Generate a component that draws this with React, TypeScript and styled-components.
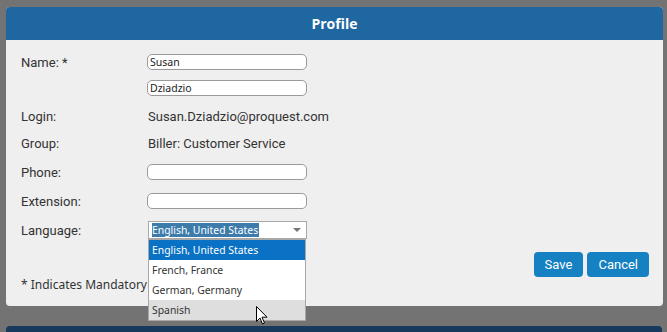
import React from 'react'
import styled, { createGlobalStyle } from 'styled-components'

const GlobalStyle = createGlobalStyle`
	html, body {
		margin: 0;
		padding: 0;
		background: #737373;
		overflow: hidden;
	}
`

// Страница с модальным окном
const Page = styled.div`
	width: 667px;
	height: 332px;
	padding: 7px 4px 0 6px;
	box-sizing: border-box;
	display: flex;
	flex-direction: column;
	gap: 20px;
`

const Modal = styled.div`
	width: 657px;
	border-radius: 4px;
	background: #efefef;
	display: flex;
	flex-direction: column;
`

const Header = styled.div`
	height: 33px;
	background: #1f67a0;
	border-radius: 4px 4px 0 0;
	display: flex;
	align-items: center;
	justify-content: center;
	color: #fff;
	font-family: 'Open Sans', sans-serif;
	font-weight: 700;
	font-size: 14px;
`

const Body = styled.div`
	padding: 8px 14px 13px 15px;
	display: flex;
	flex-direction: column;
`

const Row = styled.div<{ $h: number }>`
	height: ${(p) => p.$h}px;
	display: grid;
	grid-template-columns: 126px 1fr;
	align-items: center;
`

const Label = styled.div`
	font-family: Roboto, sans-serif;
	font-size: 13px;
	color: #333;
`

const Value = styled.div`
	font-family: Roboto, sans-serif;
	font-size: 13px;
	color: #333;
	padding-left: 1px;
`

const TextInput = styled.input`
	width: 160px;
	height: 16px;
	box-sizing: border-box;
	border: 1px solid #9a9a9a;
	border-radius: 5px;
	background: #fff;
	padding: 0 2px;
	font-family: 'Noto Sans', sans-serif;
	font-size: 10.5px;
	color: #222;
	outline: none;
`

const SelectWrap = styled.div`
	position: relative;
	width: 159px;
	margin-left: 1px;
`

const SelectBox = styled.div`
	height: 18px;
	box-sizing: border-box;
	border: 1px solid #a8a8a8;
	background: #fff;
	display: flex;
	align-items: center;
	padding: 0 3px;
	justify-content: space-between;
`

const SelectedText = styled.span`
	background: #3d7bab;
	color: #fff;
	font-family: 'Noto Sans', sans-serif;
	font-size: 10.4px;
	line-height: 14px;
	padding-right: 1px;
`

const Caret = styled.span`
	width: 0;
	height: 0;
	border-left: 4px solid transparent;
	border-right: 4px solid transparent;
	border-top: 4px solid #777;
	margin-right: 2px;
`

const OptionList = styled.div`
	position: absolute;
	top: 18px;
	left: 0;
	width: 158px;
	box-sizing: border-box;
	border: 1px solid #a8a8a8;
	background: #fff;
	z-index: 5;
`

const Option = styled.div<{ $active?: boolean; $hover?: boolean }>`
	height: 20px;
	display: flex;
	align-items: center;
	padding: 0 3px;
	font-family: 'Noto Sans', sans-serif;
	font-size: 10.4px;
	color: ${(p) => (p.$active ? '#fff' : '#333')};
	background: ${(p) => (p.$active ? '#0a72c4' : p.$hover ? '#dedede' : '#fff')};
`

const Cursor = styled.svg`
	position: absolute;
	left: 108px;
	top: 85px;
	z-index: 6;
`

const Actions = styled.div`
	display: flex;
	justify-content: flex-end;
	gap: 4px;
	margin-top: 4px;
`

const Button = styled.button`
	height: 25px;
	padding: 0 11px;
	border: none;
	border-radius: 4px;
	background: #1580c2;
	color: #fff;
	font-family: Roboto, sans-serif;
	font-size: 13px;
	cursor: pointer;
`

const Mandatory = styled.div`
	height: 16px;
	line-height: 16px;
	font-family: 'Noto Sans', sans-serif;
	font-size: 12px;
	color: #333;
`

const NextPanel = styled.div`
	width: 656px;
	height: 20px;
	background: #16395c;
	border-radius: 4px 4px 0 0;
`

const languages = ['English, United States', 'French, France', 'German, Germany', 'Spanish']

export default function App() {
	return (
		<>
			<GlobalStyle />
			<Page>
				<Modal>
					<Header>Profile</Header>
					<Body>
						<Row $h={28}>
							<Label>Name: *</Label>
							<TextInput defaultValue="Susan" />
						</Row>
						<Row $h={24}>
							<span />
							<TextInput defaultValue="Dziadzio" />
						</Row>
						<Row $h={32}>
							<Label>Login:</Label>
							<Value>Susan.Dziadzio@proquest.com</Value>
						</Row>
						<Row $h={22}>
							<Label>Group:</Label>
							<Value>Biller: Customer Service</Value>
						</Row>
						<Row $h={36}>
							<Label>Phone:</Label>
							<TextInput />
						</Row>
						<Row $h={22}>
							<Label>Extension:</Label>
							<TextInput />
						</Row>
						<Row $h={36}>
							<Label>Language:</Label>
							<SelectWrap>
								<SelectBox>
									<SelectedText>English, United States</SelectedText>
									<Caret />
								</SelectBox>
								<OptionList>
									{languages.map((l, i) => (
										<Option key={l} $active={i === 0} $hover={i === 3}>
											{l}
										</Option>
									))}
								</OptionList>
								<Cursor width="12" height="19" viewBox="0 0 12 19">
									<path
										d="M0.5 0.5 L0.5 15.5 L4 12 L6.5 18 L8.5 17 L6 11.2 L11 11.2 Z"
										fill="#fff"
										stroke="#000"
										strokeWidth="1"
										strokeLinejoin="round"
									/>
								</Cursor>
							</SelectWrap>
						</Row>
						<Actions>
							<Button>Save</Button>
							<Button>Cancel</Button>
						</Actions>
						<Mandatory>* Indicates Mandatory</Mandatory>
					</Body>
				</Modal>
				<NextPanel />
			</Page>
		</>
	)
}
